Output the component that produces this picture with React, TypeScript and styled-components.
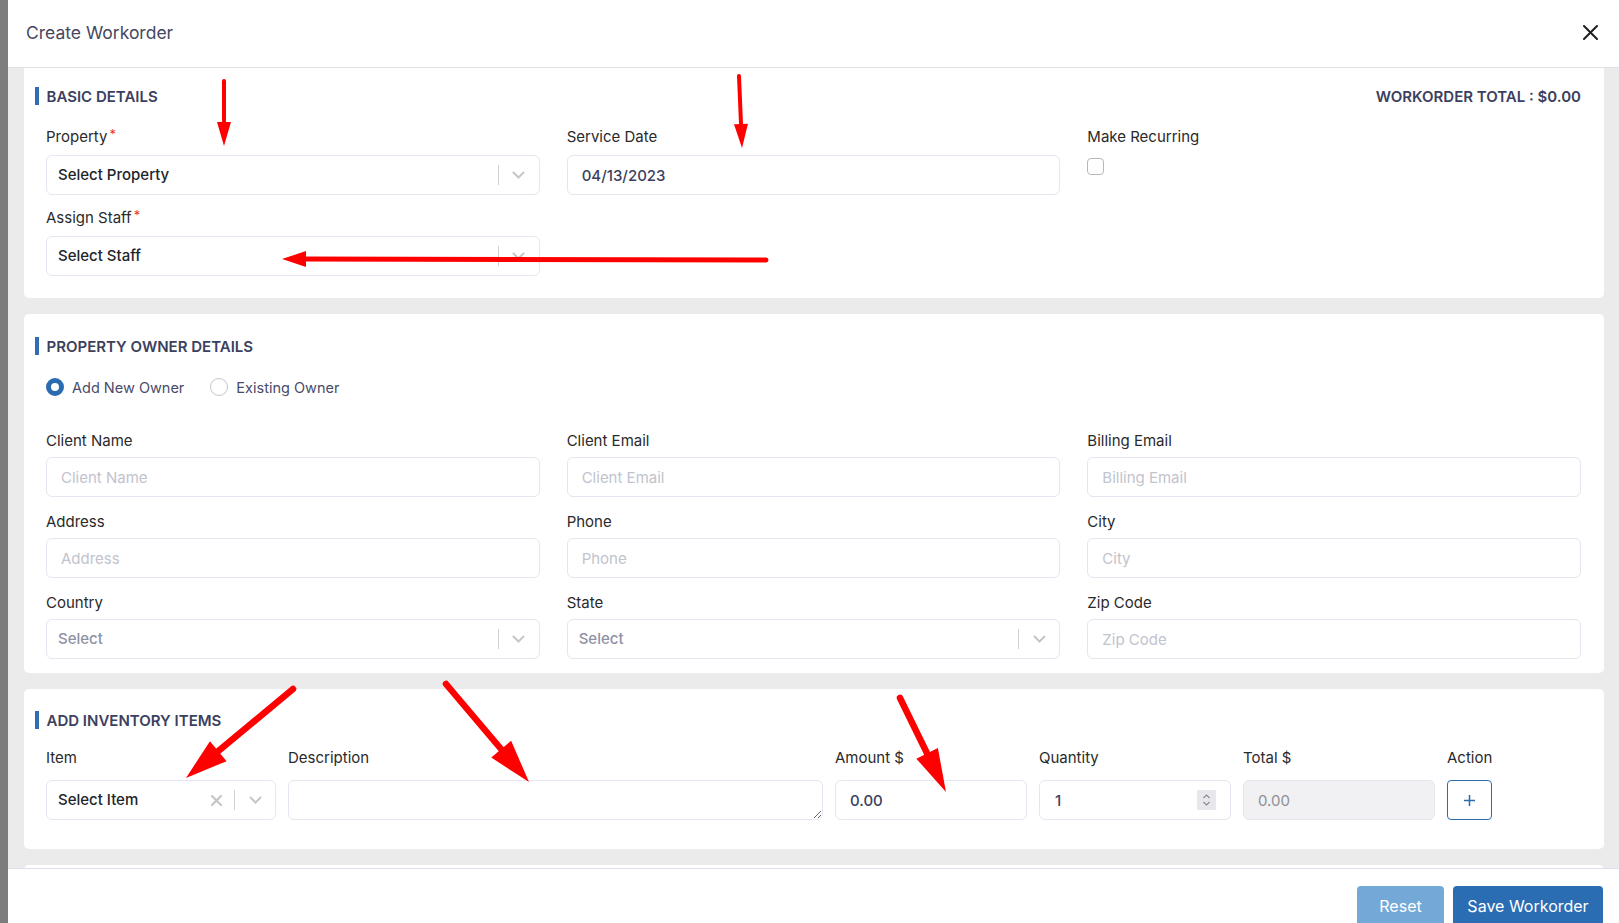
import React from 'react';
import styled, { createGlobalStyle } from 'styled-components';

const GlobalStyle = createGlobalStyle`
  * { box-sizing: border-box; }
  html, body { margin: 0; padding: 0; height: 100%; overflow: hidden; }
  body { font-family: Inter, "Open Sans", sans-serif; background: #7d7d7d; }
  #root { height: 100%; }
`;

const Page = styled.div`
  position: relative;
  display: flex;
  width: 1619px;
  height: 923px;
  overflow: hidden;
`;

const Backdrop = styled.div`
  width: 8px;
  flex-shrink: 0;
  background: #7d7d7d;
`;

const Modal = styled.div`
  flex: 1;
  min-width: 0;
  display: flex;
  flex-direction: column;
  background: #fff;
`;

const Header = styled.div`
  height: 68px;
  flex-shrink: 0;
  display: flex;
  align-items: center;
  justify-content: space-between;
  padding: 0 21px 2px 18px;
  border-bottom: 1px solid #dfe1e8;
`;

const Title = styled.h5`
  margin: 0;
  font-size: 17.5px;
  font-weight: 400;
  color: #45475f;
`;

const CloseButton = styled.button`
  background: none;
  border: none;
  padding: 0;
  display: flex;
  cursor: pointer;
`;

const Body = styled.div`
  flex: 1;
  min-height: 0;
  overflow: hidden;
  background: #ebebeb;
  padding: 0 15px 0 16px;
  display: flex;
  flex-direction: column;
  gap: 16px;
`;

const Card = styled.section<{ $pad: string; $flushTop?: boolean }>`
  flex-shrink: 0;
  background: #fff;
  border-radius: ${(p) => (p.$flushTop ? '0 0 5px 5px' : '5px')};
  padding: ${(p) => p.$pad};
`;

const HeadRow = styled.div<{ $mb: number }>`
  display: flex;
  align-items: center;
  justify-content: space-between;
  height: 20px;
  margin-bottom: ${(p) => p.$mb}px;
`;

const SectionTitle = styled.h6`
  margin: 0 0 0 -11px;
  display: flex;
  align-items: center;
  gap: 8px;
  font-size: 15px;
  font-weight: 600;
  color: #3c3f5e;
  text-transform: uppercase;

  &::before {
    content: '';
    width: 3.5px;
    height: 18px;
    background: #2f6db5;
  }
`;

const Total = styled.div`
  font-size: 15px;
  font-weight: 600;
  color: #3c3f5e;
`;

const Grid = styled.div<{ $cols: string; $gap: number; $rowGap?: number }>`
  display: grid;
  grid-template-columns: ${(p) => p.$cols};
  column-gap: ${(p) => p.$gap}px;
  row-gap: ${(p) => p.$rowGap ?? 0}px;
`;

const Field = styled.div<{ $col?: string }>`
  display: flex;
  flex-direction: column;
  min-width: 0;
  grid-column: ${(p) => p.$col ?? 'auto'};
`;

const Label = styled.label<{ $mb: number }>`
  font-size: 15px;
  line-height: 20px;
  color: #2a2a2a;
  margin-bottom: ${(p) => p.$mb}px;
  white-space: nowrap;
`;

const Req = styled.span`
  color: #e53935;
  font-size: 13px;
  margin-left: 2px;
  vertical-align: top;
  line-height: 14px;
`;

const Input = styled.input`
  height: 40px;
  width: 100%;
  border: 1px solid #e5e6ef;
  border-radius: 6px;
  padding: 0 14px;
  font-family: inherit;
  font-size: 15px;
  font-weight: 500;
  color: #3c3f5e;
  background: #fff;
  outline: none;

  &::placeholder {
    color: #c1c3cd;
    font-weight: 400;
  }

  &:disabled {
    background: #f1f1f3;
    color: #8f8f94;
    font-weight: 400;
  }
`;

const TextArea = styled.textarea`
  display: block;
  height: 40px;
  min-height: 40px;
  width: 100%;
  border: 1px solid #e5e6ef;
  border-radius: 6px;
  padding: 9px 14px;
  font-family: inherit;
  font-size: 15px;
  resize: vertical;
  outline: none;
`;

const SelectBox = styled.div`
  height: 40px;
  display: flex;
  align-items: center;
  border: 1px solid #e5e6ef;
  border-radius: 6px;
  background: #fff;
`;

const SelectText = styled.span<{ $muted?: boolean }>`
  flex: 1;
  padding-left: 11px;
  padding-bottom: 1px;
  font-size: 15px;
  font-weight: 500;
  color: ${(p) => (p.$muted ? '#8e91a4' : '#212529')};
  white-space: nowrap;
  overflow: hidden;
`;

const IndicatorSlot = styled.span<{ $w: number }>`
  width: ${(p) => p.$w}px;
  display: flex;
  align-items: center;
  justify-content: center;
`;

const Separator = styled.span`
  width: 1px;
  height: 20px;
  background: #d0d0d0;
`;

const CheckBox = styled.span`
  width: 17px;
  height: 17px;
  margin-top: 3px;
  border: 1px solid #b7b7b7;
  border-radius: 4px;
  background: #fff;
`;

const RadioRow = styled.div`
  display: flex;
  align-items: center;
  gap: 26px;
  height: 18px;
  margin-bottom: 35px;
`;

const RadioOption = styled.label`
  display: flex;
  align-items: center;
  gap: 8px;
  font-size: 14.5px;
  color: #4a4b68;
`;

const RadioDot = styled.span<{ $on?: boolean }>`
  width: 18px;
  height: 18px;
  border-radius: 50%;
  background: #fff;
  border: ${(p) => (p.$on ? '5px solid #2b6cb0' : '1.5px solid #c6c6c6')};
`;

const QtyBox = styled.div`
  height: 40px;
  display: flex;
  align-items: center;
  padding: 0 14px 0 15px;
  border: 1px solid #e5e6ef;
  border-radius: 6px;
  font-size: 15px;
  font-weight: 500;
  color: #3c3f5e;
`;

const QtyValue = styled.span`
  flex: 1;
`;

const Spinner = styled.span`
  width: 19px;
  height: 20px;
  background: #e8e8ec;
  display: flex;
  align-items: center;
  justify-content: center;
`;

const AddButton = styled.button`
  width: 45px;
  height: 40px;
  border: 1.5px solid #2b6cb0;
  border-radius: 4px;
  background: #fff;
  display: flex;
  align-items: center;
  justify-content: center;
  padding: 0;
`;

const Footer = styled.div`
  height: 55px;
  flex-shrink: 0;
  overflow: hidden;
  border-top: 1px solid #dde0ea;
  padding: 17px 16px 0;
  display: flex;
  justify-content: flex-end;
  align-items: flex-start;
  gap: 9px;
`;

const Button = styled.button<{ $w: number; $muted?: boolean }>`
  width: ${(p) => p.$w}px;
  height: 42px;
  border: none;
  border-radius: 4px;
  background: ${(p) => (p.$muted ? '#74a9d7' : '#2b6db3')};
  color: #fff;
  font-family: inherit;
  font-size: 16px;
  padding: 0 0 2px;
`;

const Annotations = styled.svg`
  position: absolute;
  left: 0;
  top: 0;
  width: 1619px;
  height: 923px;
  pointer-events: none;
`;

const Chevron = () => (
  <svg width="13" height="8" viewBox="0 0 13 8">
    <path d="M1.5 1.5l5 5 5-5" fill="none" stroke="#c6c6c6" strokeWidth="2" strokeLinecap="round" />
  </svg>
);

const ClearX = () => (
  <svg width="11" height="11" viewBox="0 0 11 11">
    <path d="M1 1l9 9M10 1l-9 9" stroke="#c6c6c6" strokeWidth="2.2" strokeLinecap="round" />
  </svg>
);

const Select = ({ text, muted, clearable }: { text: string; muted?: boolean; clearable?: boolean }) => (
  <SelectBox>
    <SelectText $muted={muted}>{text}</SelectText>
    {clearable && (
      <IndicatorSlot $w={36}>
        <ClearX />
      </IndicatorSlot>
    )}
    <Separator />
    <IndicatorSlot $w={40}>
      <Chevron />
    </IndicatorSlot>
  </SelectBox>
);

type Arrow = { x1: number; y1: number; x2: number; y2: number; head: number; half: number; w: number };

const arrows: Arrow[] = [
  { x1: 224, y1: 81, x2: 224, y2: 146, head: 24, half: 7, w: 4 },
  { x1: 739, y1: 76, x2: 742, y2: 148, head: 24, half: 7, w: 4 },
  { x1: 766, y1: 260, x2: 282, y2: 259, head: 24, half: 8, w: 5 },
  { x1: 293, y1: 689, x2: 186, y2: 778, head: 42, half: 13, w: 6.5 },
  { x1: 446, y1: 684, x2: 529, y2: 782, head: 43, half: 13, w: 6.5 },
  { x1: 900, y1: 698, x2: 946, y2: 792, head: 43, half: 12, w: 6.5 },
];

const ArrowMark = ({ a }: { a: Arrow }) => {
  const dx = a.x2 - a.x1;
  const dy = a.y2 - a.y1;
  const len = Math.hypot(dx, dy);
  const ux = dx / len;
  const uy = dy / len;
  const bx = a.x2 - ux * a.head;
  const by = a.y2 - uy * a.head;
  const pts = `${a.x2},${a.y2} ${bx - uy * a.half},${by + ux * a.half} ${bx + uy * a.half},${by - ux * a.half}`;
  return (
    <g>
      <line x1={a.x1} y1={a.y1} x2={bx + ux * 3} y2={by + uy * 3} stroke="#ff0000" strokeWidth={a.w} strokeLinecap="round" />
      <polygon points={pts} fill="#ff0000" />
    </g>
  );
};

const App: React.FC = () => {
  return (
    <Page>
      <GlobalStyle />
      <Backdrop />
      <Modal>
        <Header>
          <Title>Create Workorder</Title>
          <CloseButton>
            <svg width="15" height="15" viewBox="0 0 15 15">
              <path d="M1 1l13 13M14 1L1 14" stroke="#1f1f1f" strokeWidth="2" strokeLinecap="round" />
            </svg>
          </CloseButton>
        </Header>

        <Body>
          <Card $flushTop $pad="18px 23px 22px 22px">
            <HeadRow $mb={21}>
              <SectionTitle>Basic Details</SectionTitle>
              <Total>WORKORDER TOTAL : $0.00</Total>
            </HeadRow>
            <Grid $cols="1fr 1fr 1fr" $gap={27} $rowGap={13}>
              <Field>
                <Label $mb={8}>
                  Property<Req>*</Req>
                </Label>
                <Select text="Select Property" />
              </Field>
              <Field>
                <Label $mb={8}>Service Date</Label>
                <Input defaultValue="04/13/2023" />
              </Field>
              <Field>
                <Label $mb={8}>Make Recurring</Label>
                <CheckBox />
              </Field>
              <Field $col="1">
                <Label $mb={8}>
                  Assign Staff<Req>*</Req>
                </Label>
                <Select text="Select Staff" />
              </Field>
            </Grid>
          </Card>

          <Card $pad="22px 23px 14px 22px">
            <HeadRow $mb={22}>
              <SectionTitle>Property Owner Details</SectionTitle>
            </HeadRow>
            <RadioRow>
              <RadioOption>
                <RadioDot $on />
                Add New Owner
              </RadioOption>
              <RadioOption>
                <RadioDot />
                Existing Owner
              </RadioOption>
            </RadioRow>
            <Grid $cols="1fr 1fr 1fr" $gap={27} $rowGap={15}>
              <Field>
                <Label $mb={6}>Client Name</Label>
                <Input placeholder="Client Name" />
              </Field>
              <Field>
                <Label $mb={6}>Client Email</Label>
                <Input placeholder="Client Email" />
              </Field>
              <Field>
                <Label $mb={6}>Billing Email</Label>
                <Input placeholder="Billing Email" />
              </Field>
              <Field>
                <Label $mb={6}>Address</Label>
                <Input placeholder="Address" />
              </Field>
              <Field>
                <Label $mb={6}>Phone</Label>
                <Input placeholder="Phone" />
              </Field>
              <Field>
                <Label $mb={6}>City</Label>
                <Input placeholder="City" />
              </Field>
              <Field>
                <Label $mb={6}>Country</Label>
                <Select text="Select" muted />
              </Field>
              <Field>
                <Label $mb={6}>State</Label>
                <Select text="Select" muted />
              </Field>
              <Field>
                <Label $mb={6}>Zip Code</Label>
                <Input placeholder="Zip Code" />
              </Field>
            </Grid>
          </Card>

          <Card $pad="21px 23px 29px 22px">
            <HeadRow $mb={18}>
              <SectionTitle>Add Inventory Items</SectionTitle>
            </HeadRow>
            <Grid $cols="230px 535px 192px 192px 192px 1fr" $gap={12}>
              <Field>
                <Label $mb={12}>Item</Label>
                <Select text="Select Item" clearable />
              </Field>
              <Field>
                <Label $mb={12}>Description</Label>
                <TextArea />
              </Field>
              <Field>
                <Label $mb={12}>Amount $</Label>
                <Input defaultValue="0.00" />
              </Field>
              <Field>
                <Label $mb={12}>Quantity</Label>
                <QtyBox>
                  <QtyValue>1</QtyValue>
                  <Spinner>
                    <svg width="9" height="14" viewBox="0 0 9 14">
                      <path d="M1.5 5l3-3 3 3M1.5 9l3 3 3-3" fill="none" stroke="#8b8b95" strokeWidth="1.2" />
                    </svg>
                  </Spinner>
                </QtyBox>
              </Field>
              <Field>
                <Label $mb={12}>Total $</Label>
                <Input defaultValue="0.00" disabled />
              </Field>
              <Field>
                <Label $mb={12}>Action</Label>
                <AddButton>
                  <svg width="13" height="13" viewBox="0 0 13 13">
                    <path d="M6.5 1v11M1 6.5h11" stroke="#2b6cb0" strokeWidth="1.5" />
                  </svg>
                </AddButton>
              </Field>
            </Grid>
          </Card>

          <Card $pad="40px 0 0" />
        </Body>

        <Footer>
          <Button $w={87} $muted>
            Reset
          </Button>
          <Button $w={150}>Save Workorder</Button>
        </Footer>
      </Modal>

      <Annotations viewBox="0 0 1619 923">
        {arrows.map((a, i) => (
          <ArrowMark key={i} a={a} />
        ))}
      </Annotations>
    </Page>
  );
};

export default App;
